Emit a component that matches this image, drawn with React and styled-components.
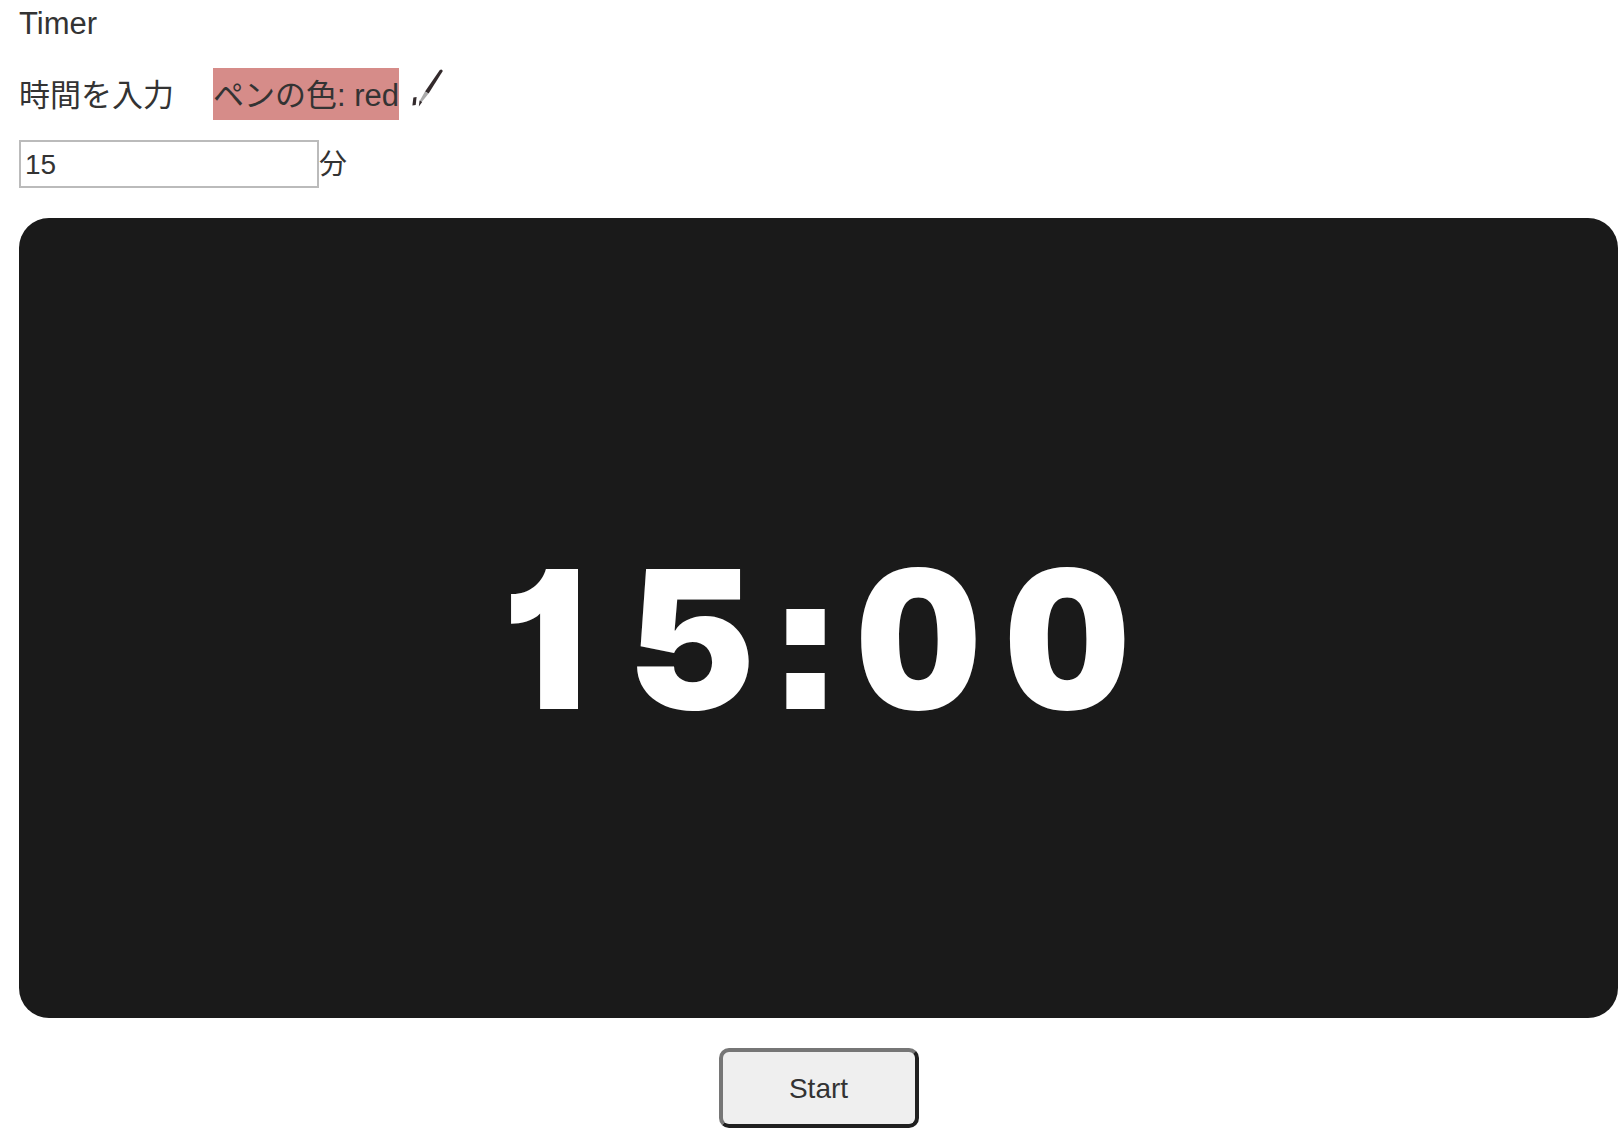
import React, { useState } from "react";
import styled, { createGlobalStyle } from "styled-components";

const GlobalStyle = createGlobalStyle`
  *, *::before, *::after { box-sizing: border-box; }
  body {
    margin: 0;
    background: #fff;
    color: #333;
    font-family: "Liberation Sans", "Noto Sans CJK JP", sans-serif;
    font-size: 31px;
  }
`;

const Page = styled.main`
  display: flex;
  flex-direction: column;
  padding-left: 19px;
`;

const Title = styled.h1`
  margin: 0;
  padding-top: 4px;
  height: 68px;
  font-size: 31px;
  font-weight: 400;
  line-height: 40px;
`;

const PenRow = styled.div`
  display: flex;
  align-items: flex-start;
  height: 72px;
  line-height: 48px;
`;

const FieldLabel = styled.label`
  margin-right: 39px;
  padding-top: 4px;
`;

const PenColor = styled.span`
  margin-right: 12px;
  padding-top: 4px;
  background: #d68c89;
`;

const PenIcon = styled.svg`
  width: 32px;
  height: 40px;
`;

const MinuteRow = styled.div`
  display: flex;
  align-items: center;
  margin-bottom: 30px;
  font-size: 28px;
  line-height: 44px;
`;

const Unit = styled.span`
  padding-top: 2px;
`;

const MinuteInput = styled.input`
  width: 300px;
  height: 48px;
  padding: 2px 4px 0;
  border: 2px solid #bbb;
  background: #fff;
  color: inherit;
  font: inherit;
`;

const Display = styled.section`
  display: flex;
  align-items: center;
  justify-content: center;
  height: 800px;
  padding-top: 42px;
  border-radius: 30px;
  background: #1a1a1a;
`;

const Digits = styled.time`
  color: #fff;
  font-family: Inter, "Liberation Sans", sans-serif;
  font-size: 192px;
  font-weight: 900;
  font-feature-settings: "tnum", "ss07", "cv01";
  line-height: 1;
  letter-spacing: 25px;
`;

/* The tabular "1" has a foot; this shows the plain one in a cell as wide as the other digits. */
const PlainOne = styled.span`
  display: inline-block;
  width: 148px;
  text-align: center;
  font-feature-settings: "cv01";
`;

const StartButton = styled.button`
  align-self: center;
  width: 200px;
  height: 80px;
  margin: 30px 0 15px;
  padding: 2px 0 0;
  border: 4px solid;
  border-color: #767676 #202020 #202020 #767676;
  border-radius: 10px;
  background: #efefef;
  color: inherit;
  font: inherit;
  font-size: 28px;
`;

function Clock({ value }) {
  return (
    <Digits>
      {value
        .split(/(1)/)
        .filter(Boolean)
        .map((part, i) => (part === "1" ? <PlainOne key={i}>1</PlainOne> : part))}
    </Digits>
  );
}

export default function App() {
  const [minutes, setMinutes] = useState("15");
  return (
    <Page>
      <GlobalStyle />
      <Title>Timer</Title>
      <PenRow>
        <FieldLabel htmlFor="minutes">時間を入力</FieldLabel>
        <PenColor>ペンの色: red</PenColor>
        <PenIcon viewBox="0 0 32 40" aria-hidden="true">
          <path d="M2.4 29.4 L5.6 29 L4.7 37 L1.4 37.6 Z" fill="#332a2c" />
          <path d="M28.8 2 Q31 0.6 31.8 3 L17.6 25.6 L14 23.6 Z" fill="#332a2c" />
          <path d="M14 23.6 L17.6 25.6 L10.8 34 L8.6 33 Z" fill="#aaa" />
          <path d="M8.6 32.6 L11.2 34 L7.8 38.4 Z" fill="#332a2c" />
        </PenIcon>
      </PenRow>
      <MinuteRow>
        <MinuteInput
          id="minutes"
          inputMode="numeric"
          value={minutes}
          onChange={(e) => setMinutes(e.target.value)}
        />
        <Unit>分</Unit>
      </MinuteRow>
      <Display>
        <Clock value={`${minutes.padStart(2, "0")}:00`} />
      </Display>
      <StartButton type="button">Start</StartButton>
    </Page>
  );
}
